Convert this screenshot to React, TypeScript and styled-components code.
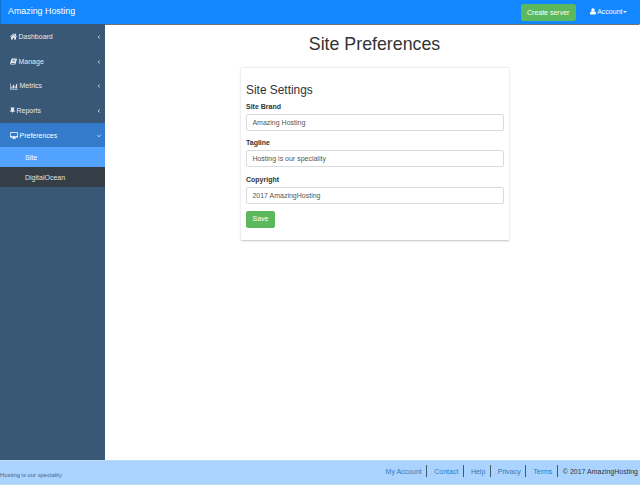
import React from 'react';
import styled, { createGlobalStyle } from 'styled-components';

const GlobalStyle = createGlobalStyle`
  * { box-sizing: border-box; }
  body {
    margin: 0;
    background: #fff;
    color: #333;
    font: 7px/10px "Liberation Sans", Arial, sans-serif;
    overflow: hidden;
  }
`;

const Page = styled.div`
  height: 488px;
  padding-bottom: 3px;
  display: flex;
  flex-direction: column;
`;

const Navbar = styled.header`
  height: 24px;
  flex: none;
  display: flex;
  align-items: flex-start;
  padding: 0 13px 0 7px;
  background: #1387ff;
  border-left: 1px solid #1672d2;
  box-shadow: 0 0.5px 1px rgba(0, 0, 0, 0.55);
  color: #fff;
`;

const Brand = styled.span`
  flex: 1;
  font-size: 8.9px;
  line-height: 23px;
  white-space: nowrap;
`;

const Button = styled.button<{ $width: number }>`
  display: block;
  width: ${(p) => p.$width}px;
  height: 17px;
  padding: 0;
  border: 0.5px solid #5cb85c;
  border-radius: 2px;
  background: #5cb85c;
  color: #fff;
  font: inherit;
  text-align: center;
`;

const CreateSlot = styled.div`
  padding-top: 4px;
  margin-right: 14px;
`;

const Account = styled.span`
  display: flex;
  align-items: center;
  height: 23px;
`;

const Caret = styled.i`
  margin-left: 0.5px;
  border-top: 2px solid #fff;
  border-left: 2px solid transparent;
  border-right: 2px solid transparent;
`;

const Body = styled.div`
  flex: 1;
  display: flex;
  min-height: 0;
`;

const Sidebar = styled.nav`
  width: 105px;
  flex: none;
  background: #395876;
`;

const MenuItem = styled.div<{ $active?: boolean }>`
  height: 24.7px;
  display: flex;
  align-items: center;
  padding: 1px 4px 0 10px;
  background: ${(p) => (p.$active ? '#347ccb' : 'transparent')};
  color: ${(p) => (p.$active ? '#fff' : '#e4e9ee')};
`;

const MenuLabel = styled.span`
  flex: 1;
  white-space: nowrap;
`;

const SubItem = styled.div<{ $active?: boolean }>`
  height: ${(p) => (p.$active ? 19.5 : 20.5)}px;
  display: flex;
  align-items: center;
  padding: 1px 0 0 25px;
  background: ${(p) => (p.$active ? '#52a2ff' : '#353d47')};
  color: ${(p) => (p.$active ? '#fff' : '#dfe3e8')};
`;

const Content = styled.main`
  flex: 1;
  display: flex;
  flex-direction: column;
  align-items: center;
`;

const Title = styled.h1`
  margin: 10px 0 14px 4px;
  font-size: 17.8px;
  line-height: 20px;
  font-weight: 400;
`;

const Card = styled.section`
  width: 268px;
  height: 172px;
  margin-left: 5px;
  padding: 15px 5px 0;
  background: #fff;
  border-radius: 1px;
  box-shadow: 0 0.5px 2px rgba(40, 60, 75, 0.3);
`;

const CardTitle = styled.h2`
  margin: 0 0 4px;
  font-size: 11.9px;
  line-height: 14px;
  font-weight: 400;
`;

const Field = styled.div`
  height: 36.6px;
`;

const FieldLabel = styled.span`
  display: block;
  height: 12.5px;
  padding-top: 0.5px;
  font-weight: 700;
`;

const TextBox = styled.div`
  width: 258px;
  height: 17px;
  padding: 0 5.4px;
  border: 1px solid #d9dcde;
  border-radius: 2px;
  background: #fff;
  color: #555;
  line-height: 15px;
`;

const Footer = styled.footer`
  height: 25px;
  flex: none;
  display: flex;
  align-items: flex-start;
  justify-content: space-between;
  padding-right: 2px;
  background: #aad3ff;
  border-top: 1px solid #bcdcfa;
  border-bottom: 1px solid #bcdffb;
`;

const Tagline = styled.span`
  padding-top: 9px;
  font-size: 5.9px;
  color: #43658e;
`;

const FooterLinks = styled.div`
  display: flex;
  padding-top: 4px;
  line-height: 13px;
  white-space: nowrap;
`;

const FooterLink = styled.a`
  height: 12px;
  padding-right: 4.5px;
  margin-right: 7px;
  border-right: 1px solid #46586c;
  color: #337ab7;
  &:last-of-type { margin-right: 5px; }
`;

const Icon = styled.svg<{ $w?: number }>`
  width: ${(p) => p.$w ?? 7}px;
  height: 7px;
  flex: none;
  margin-right: 1.5px;
  fill: currentColor;
`;

const Chevron = styled.svg`
  width: 4px;
  height: 4px;
  flex: none;
  fill: none;
  stroke: currentColor;
  stroke-width: 0.8;
`;

const menu = [
  {
    label: 'Dashboard', width: 7, box: '0 0 14 14',
    icon: <path d="M7 .8 0 6.900l.8 1L7 2.600l6.200 5.300.8-1-2-1.700V1.500H9.800v1.700zM7 3.600 2 7.900V13h3.800V9.300h2.400V13H12V7.900z" />,
  },
  {
    label: 'Manage', width: 7, box: '0 0 14 14',
    icon: <path fillRule="evenodd" d="M4.200 1h8.600q1.400.3 1 1.500L11.400 11.200q-.4 1.600-1.700 1.800H2Q-.1 12.700.200 10.600L2.700 2.200Q3.200 1 4.200 1zM5.300 3.300l-.3 1h5.600l.3-1zM4.700 5.500l-.3 1h5.600l.3-1zM2 10.200q-.5 1.400.6 1.400h6.700l.5-1.400z" />,
  },
  {
    label: 'Metrics', width: 8, box: '0 0 16 14',
    icon: <path d="M0 1h1.200v10.800H16V13H0zM2.500 7h2.200v4H2.500zM5.700 3.500h2.200V11H5.700zM8.900 5.500h2.200V11H8.900zM12.100 2h2.200v9h-2.200z" />,
  },
  {
    label: 'Reports', width: 5, box: '2 0 10 14',
    icon: <path d="M3 1h8v1.500h-1v4q2 1 2 3H7.700L7 14l-.7-4.500H2q0-2 2-3v-4H3z" />,
  },
];

const fields = [
  ['Site Brand', 'Amazing Hosting'],
  ['Tagline', 'Hosting is our speciality'],
  ['Copyright', '2017 AmazingHosting'],
];

const links = ['My Account', 'Contact', 'Help', 'Privacy', 'Terms'];

export default function App() {
  return (
    <Page>
      <GlobalStyle />
      <Navbar>
        <Brand>Amazing Hosting</Brand>
        <CreateSlot>
          <Button $width={55}>Create server</Button>
        </CreateSlot>
        <Account>
          <Icon viewBox="1 0 12 14" $w={6}>
            <path d="M7 .7a3.300 3.300 0 0 1 2.600 5.500q-2.600 2.300-5.200 0A3.300 3.300 0 0 1 7 .7zM3.700 6.300q3.300 2.800 6.600 0Q13 7 13 11q0 2-2 2H3q-2 0-2-2 0-4 2.700-4.700z" />
          </Icon>
          Account
          <Caret />
        </Account>
      </Navbar>
      <Body>
        <Sidebar>
          {menu.map((item) => (
            <MenuItem key={item.label}>
              <Icon viewBox={item.box} $w={item.width}>{item.icon}</Icon>
              <MenuLabel>{item.label}</MenuLabel>
              <Chevron viewBox="0 0 4 4"><path d="M2.700.4 1.200 2l1.500 1.600" /></Chevron>
            </MenuItem>
          ))}
          <MenuItem $active>
            <Icon viewBox="0 0 16 14" $w={8}>
              <path fillRule="evenodd" d="M1.200.5h13.600q1.200 0 1.200 1.200v8.100q0 1.200-1.200 1.200H10v1.200h1.500v1.300h-7v-1.300H6V11H1.200Q0 11 0 9.800V1.700Q0 .5 1.200.5zM1.400 1.900v6.700h13.200V1.900z" />
            </Icon>
            <MenuLabel>Preferences</MenuLabel>
            <Chevron viewBox="0 0 4 4"><path d="M.4 1.200 2 2.700l1.600-1.500" /></Chevron>
          </MenuItem>
          <SubItem $active>Site</SubItem>
          <SubItem>DigitalOcean</SubItem>
        </Sidebar>
        <Content>
          <Title>Site Preferences</Title>
          <Card>
            <CardTitle>Site Settings</CardTitle>
            {fields.map(([label, value]) => (
              <Field key={label}>
                <FieldLabel>{label}</FieldLabel>
                <TextBox role="textbox" contentEditable suppressContentEditableWarning>
                  {value}
                </TextBox>
              </Field>
            ))}
            <Button $width={29}>Save</Button>
          </Card>
        </Content>
      </Body>
      <Footer>
        <Tagline>Hosting is our speciality</Tagline>
        <FooterLinks>
          {links.map((link) => <FooterLink key={link}>{link}</FooterLink>)}
          <span>© 2017 AmazingHosting</span>
        </FooterLinks>
      </Footer>
    </Page>
  );
}
